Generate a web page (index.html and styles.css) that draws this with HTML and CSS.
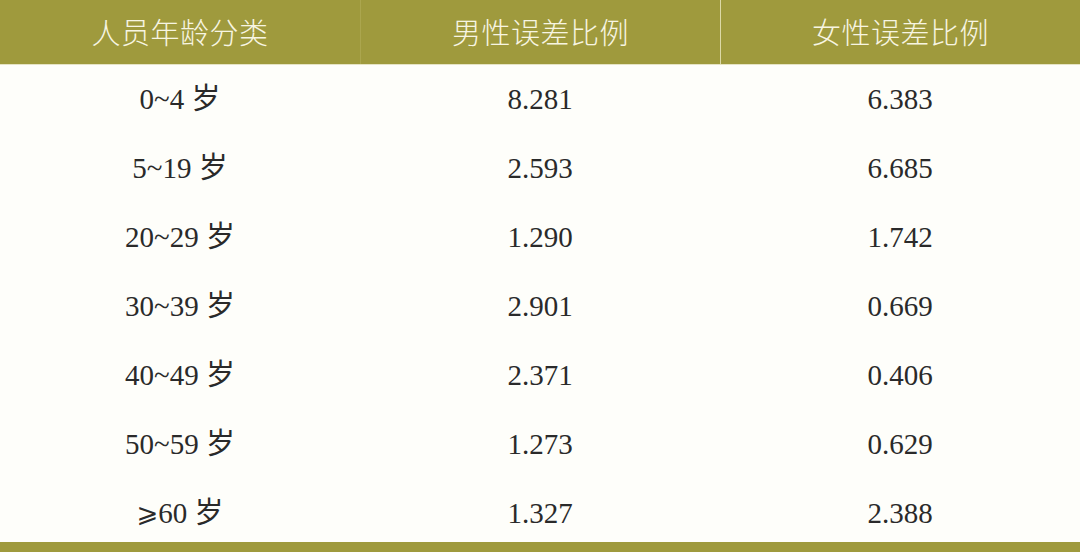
FILE: index.html
```html
<!DOCTYPE html>
<html lang="zh-CN">
<head>
<meta charset="utf-8">
<title>人员年龄分类误差比例</title>
<link rel="stylesheet" href="styles.css">
</head>
<body>
<div class="table">
  <div class="head">
    <div class="hcell">人员年龄分类</div>
    <div class="hcell">男性误差比例</div>
    <div class="hcell">女性误差比例</div>
  </div>
  <div class="body">
    <div class="row"><div class="cell">0~4 岁</div><div class="cell">8.281</div><div class="cell">6.383</div></div>
    <div class="row"><div class="cell">5~19 岁</div><div class="cell">2.593</div><div class="cell">6.685</div></div>
    <div class="row"><div class="cell">20~29 岁</div><div class="cell">1.290</div><div class="cell">1.742</div></div>
    <div class="row"><div class="cell">30~39 岁</div><div class="cell">2.901</div><div class="cell">0.669</div></div>
    <div class="row"><div class="cell">40~49 岁</div><div class="cell">2.371</div><div class="cell">0.406</div></div>
    <div class="row"><div class="cell">50~59 岁</div><div class="cell">1.273</div><div class="cell">0.629</div></div>
    <div class="row"><div class="cell"><span class="ge">⩾</span>60 岁</div><div class="cell">1.327</div><div class="cell">2.388</div></div>
  </div>
  <div class="foot"></div>
</div>
</body>
</html>
```

FILE: styles.css
```css
html, body {
  margin: 0;
  padding: 0;
  background: #fefefa;
}
.table {
  width: 1080px;
  height: 552px;
  display: flex;
  flex-direction: column;
  overflow: hidden;
}
.head {
  display: grid;
  grid-template-columns: 360px 360px 360px;
  height: 64px;
  background: #9f9a3d;
  border-bottom: 1px solid #e6e4c4;
}
.hcell {
  display: flex;
  align-items: center;
  justify-content: center;
  color: #f7f5e2;
  font-family: "Noto Sans CJK SC", sans-serif;
  font-weight: 300;
  font-size: 29px;
  letter-spacing: 0.5px;
  padding-bottom: 2px;
}
.hcell:nth-child(2) {
  border-left: 1px solid #aba64e;
}
.hcell:nth-child(3) {
  border-left: 1px solid #dcd9a6;
}
.body {
  flex: 1;
  display: flex;
  flex-direction: column;
}
.row {
  display: grid;
  grid-template-columns: 360px 360px 360px;
  height: 69px;
  flex: none;
}
.row:last-child {
  height: 63px;
}
.cell {
  display: flex;
  justify-content: center;
  align-items: flex-start;
  padding-top: 14px;
  line-height: 40px;
  height: 40px;
  color: #2a2a2a;
  font-family: "Liberation Serif", "Noto Sans CJK SC", serif;
  font-size: 29px;
}
.ge {
  font-family: "DejaVu Serif", "DejaVu Sans", serif;
  font-size: 26px;
}
.foot {
  height: 10px;
  flex: none;
  background: #9f9a3d;
}
```
